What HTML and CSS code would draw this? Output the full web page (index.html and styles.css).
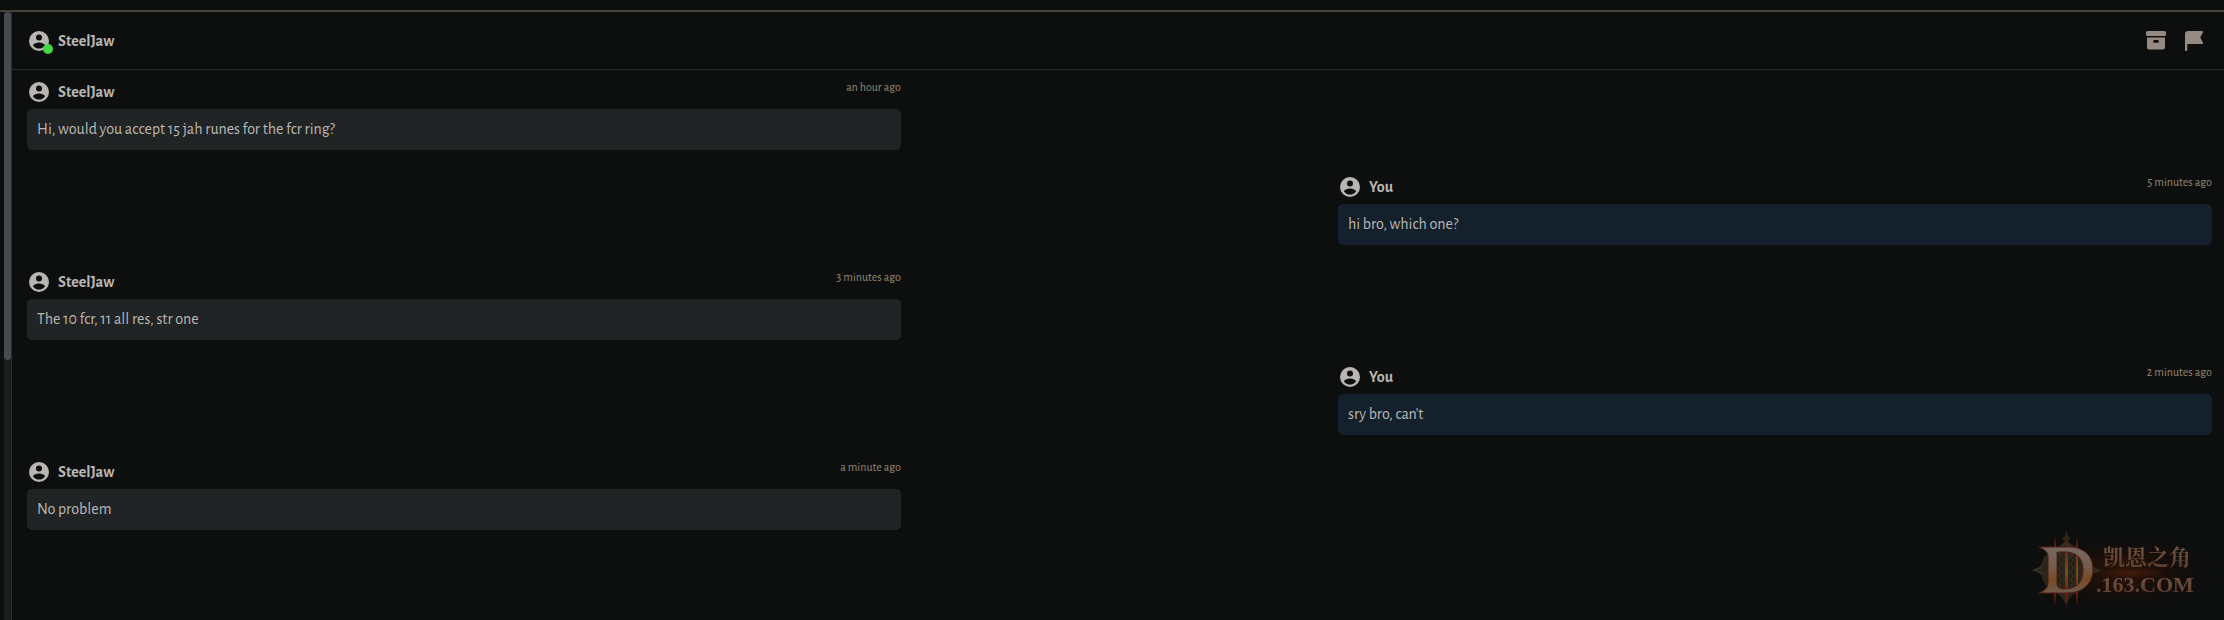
FILE: index.html
```
<!DOCTYPE html>
<html lang="en">
<head>
    <meta charset="UTF-8">
    <meta name="viewport" content="width=device-width, initial-scale=1.0">
    <title>Messages - SteelJaw</title>
    <link rel="stylesheet" href="styles.css">
</head>
<body>

    <!-- Shared icons -->
    <svg class="sprite" aria-hidden="true">
        <symbol id="icon-user" viewBox="0 0 24 24">
            <path fill-rule="evenodd" d="M12 2a10 10 0 1 0 0 20a10 10 0 0 0 0-20zM12 5.600a3 3 0 1 1 0 6a3 3 0 0 1 0-6zM12 19.500c-2.400 0-4.700-1.200-6-3.100c.1-2 4-3 6-3s5.900 1 6 3c-1.300 1.900-3.600 3.100-6 3.100z"/>
        </symbol>
    </svg>

    <div class="app">
        <!-- Conversation list scrollbar -->
        <div class="scrollbar">
            <div class="scrollbar-thumb"></div>
        </div>

        <main class="chat">
            <header class="chat-header">
                <div class="user">
                    <span class="avatar">
                        <svg class="icon"><use href="#icon-user"/></svg>
                        <span class="online"></span>
                    </span>
                    <span class="name">SteelJaw</span>
                </div>
                <div class="actions">
                    <button type="button" aria-label="Archive">
                        <svg class="icon" viewBox="0 0 24 24">
                            <path fill-rule="evenodd" d="M3.500 2h17a1.500 1.500 0 0 1 1.500 1.500v2a1.500 1.500 0 0 1-1.500 1.500h-17a1.500 1.500 0 0 1-1.500-1.500v-2a1.500 1.500 0 0 1 1.500-1.500zM3 8.500h18v10a2 2 0 0 1-2 2h-14a2 2 0 0 1-2-2zM10.500 11a1.400 1.400 0 0 0 0 2.800h3a1.400 1.400 0 0 0 0-2.800z"/>
                        </svg>
                    </button>
                    <button type="button" aria-label="Report">
                        <svg class="icon" viewBox="0 0 24 24">
                            <path d="M3 21V5a3 3 0 0 1 3-3h14a1 1 0 0 1 .9 1.500L18.200 8.500l2.700 5a1 1 0 0 1-.9 1.500H6a.7.7 0 0 0-.7.7V21a1.100 1.100 0 0 1-2.300 0z"/>
                        </svg>
                    </button>
                </div>
            </header>

            <section class="messages">
                <article class="message">
                    <div class="message-head">
                        <svg class="icon"><use href="#icon-user"/></svg>
                        <span class="name">SteelJaw</span>
                        <time>an hour ago</time>
                    </div>
                    <p class="bubble">Hi, would you accept 15 jah runes for the fcr ring?</p>
                </article>

                <article class="message mine">
                    <div class="message-head">
                        <svg class="icon"><use href="#icon-user"/></svg>
                        <span class="name">You</span>
                        <time>5 minutes ago</time>
                    </div>
                    <p class="bubble">hi bro, which one?</p>
                </article>

                <article class="message">
                    <div class="message-head">
                        <svg class="icon"><use href="#icon-user"/></svg>
                        <span class="name">SteelJaw</span>
                        <time>3 minutes ago</time>
                    </div>
                    <p class="bubble">The 10 fcr, 11 all res, str one</p>
                </article>

                <article class="message mine">
                    <div class="message-head">
                        <svg class="icon"><use href="#icon-user"/></svg>
                        <span class="name">You</span>
                        <time>2 minutes ago</time>
                    </div>
                    <p class="bubble">sry bro, can't</p>
                </article>

                <article class="message">
                    <div class="message-head">
                        <svg class="icon"><use href="#icon-user"/></svg>
                        <span class="name">SteelJaw</span>
                        <time>a minute ago</time>
                    </div>
                    <p class="bubble">No problem</p>
                </article>
            </section>
        </main>
    </div>

    <!-- Site watermark -->
    <svg class="watermark" viewBox="0 0 224 110">
        <defs>
            <linearGradient id="metal" x1="0" y1="0" x2="0" y2="1">
                <stop offset="0" stop-color="#75665d"/>
                <stop offset="0.4" stop-color="#725f52"/>
                <stop offset="0.7" stop-color="#754a26"/>
                <stop offset="1" stop-color="#6b5c4e"/>
            </linearGradient>
            <linearGradient id="letters" x1="0" y1="0" x2="0" y2="1">
                <stop offset="0" stop-color="#735847"/>
                <stop offset="1" stop-color="#5c3a27"/>
            </linearGradient>
            <linearGradient id="flame" x1="0" y1="0" x2="0" y2="1">
                <stop offset="0" stop-color="#50140a" stop-opacity="0"/>
                <stop offset="0.2" stop-color="#6a2010"/>
                <stop offset="0.5" stop-color="#75501c"/>
                <stop offset="0.8" stop-color="#6a1c0e"/>
                <stop offset="1" stop-color="#50140a" stop-opacity="0"/>
            </linearGradient>
            <radialGradient id="glow">
                <stop offset="0" stop-color="#451c0b"/>
                <stop offset="0.5" stop-color="#1c0e09" stop-opacity="0.8"/>
                <stop offset="1" stop-color="#0d0f0e" stop-opacity="0"/>
            </radialGradient>
        </defs>
        <ellipse cx="122" cy="62" rx="94" ry="38" fill="url(#glow)"/>
        <ellipse cx="130" cy="63" rx="76" ry="14" fill="url(#glow)"/>
        <!-- stone disc with four points -->
        <path fill="#2b251b" d="M66 20l2 6 3 2-3 3c2 3 5 4 8 6c9 4 14 11 16 18c3 3 6 4 11 5c-5 1-8 2-11 5c-3 8-8 14-16 18c-4 2-7 5-10 12c-3-7-6-10-10-12c-8-4-13-10-15-18c-3-3-5-4-11-5c6-1 8-2 11-5c2-8 7-14 16-18c3-2 6-3 8-6l-3-3 3-2z"/>
        <path fill="none" stroke="#40372a" stroke-width="1" d="M66 32c2 4 6 5 10 8M66 32c-2 4-6 5-10 8M34 60l8 3M34 60l8-3M100 60l-8 3M60 42v36M72 42v36M84 48v22"/>
        <path fill="none" stroke="#14120e" stroke-width="1" d="M58 46l4 4-4 4 4 4-4 4 4 4-4 4 4 4M74 46l-4 4 4 4-4 4 4 4-4 4 4 4-4 4"/>
        <path fill="url(#flame)" d="M54 28h2v66h-2zM65 22h3v78h-3zM76 28h2v66h-2z"/>
        <path fill="url(#metal)" stroke="#571a10" stroke-width="1" fill-rule="evenodd" d="M39 37H72C87 39 93 48 93 60C92 76 81 83 66 83H39C45 80 48 78 48 73V46C48 42 44 39 39 37zM57 42V73C57 77 59 79 64 79C77 79 83 72 83 60C83 48 77 43 67 42z"/>
        <text class="watermark-cn" x="103" y="55">凯恩之角</text>
        <text class="watermark-url" x="96" y="82">.163.COM</text>
    </svg>

</body>
</html>
```
FILE: styles.css
```
/* General Body Styling */
* {
    box-sizing: border-box;
}

body {
    margin: 0;
    min-height: 100vh;
    padding-top: 10px;
    background: #0d0f0e;
    color: #b9b6b2;
    font-family: "Alegreya Sans", Lato, sans-serif;
    font-size: 16px;
    line-height: 20px;
}

.sprite {
    display: none;
}

.icon {
    display: block;
    width: 24px;
    height: 24px;
    fill: currentColor;
}

/* Page Layout */
.app {
    display: flex;
    min-height: calc(100vh - 10px);
    padding-left: 4px;
    border-top: 2px solid #48423d;
}

.scrollbar {
    width: 8px;
    background: #1a1d1d;
    border-right: 1px solid #2c2c2b;
}

.scrollbar-thumb {
    height: 348px;
    background: #484c50;
    border-radius: 4px;
}

.chat {
    flex: 1;
}

/* Chat Header */
.chat-header {
    display: flex;
    align-items: center;
    justify-content: space-between;
    height: 58px;
    padding: 0 18px 0 15px;
    border-bottom: 1px solid #2a2c2b;
}

.user,
.message-head {
    display: flex;
    align-items: center;
    gap: 7px;
}

.avatar {
    position: relative;
}

.online {
    position: absolute;
    right: -2px;
    bottom: -1px;
    width: 10px;
    height: 10px;
    border-radius: 50%;
    background: #43d843;
}

.name {
    font-weight: bold;
}

.actions {
    display: flex;
    gap: 14px;
}

.actions button {
    padding: 0;
    border: 0;
    background: none;
    color: #968b80;
    cursor: pointer;
}

/* Messages */
.messages {
    display: flex;
    flex-direction: column;
    gap: 25px;
    padding: 10px 12px 30px 15px;
}

.message {
    width: 40%;
}

.mine {
    align-self: flex-end;
}

.message-head {
    height: 24px;
}

.message-head time {
    align-self: flex-start;
    margin-left: auto;
    color: #968570;
    font-size: 12px;
    line-height: 14px;
}

.bubble {
    margin: 0;
    margin-top: 5px;
    padding: 10px 10px 11px;
    border-radius: 5px;
    background: #212425;
}

.mine .bubble {
    background: #14202c;
}

/* Watermark */
.watermark {
    position: fixed;
    right: 0;
    bottom: 0;
    width: 224px;
    height: 110px;
    pointer-events: none;
}

.watermark text {
    fill: url(#letters);
    font-weight: bold;
    font-size: 22px;
}

.watermark-cn {
    font-family: "Noto Serif CJK SC", "Noto Sans CJK SC", serif;
}

.watermark-url {
    font-family: "Liberation Serif", serif;
}
```
